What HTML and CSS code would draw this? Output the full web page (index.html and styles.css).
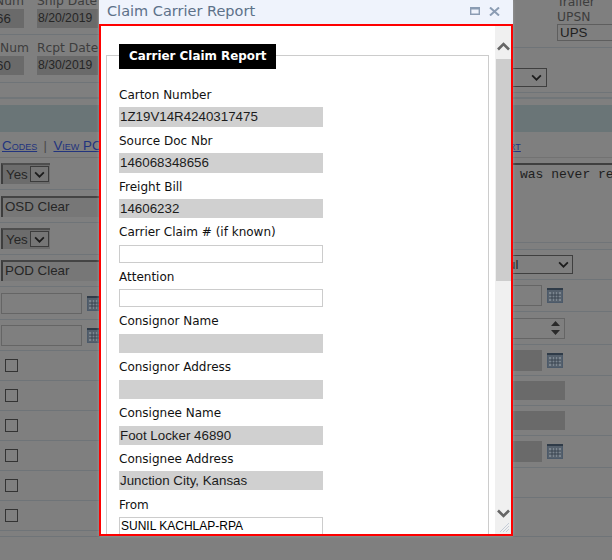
FILE: index.html
```html
<!DOCTYPE html>
<html lang="en">
<head>
<meta charset="utf-8">
<title>Claim Carrier Report</title>
<link rel="stylesheet" href="styles.css">
</head>
<body>
<svg class="defs" width="0" height="0" aria-hidden="true">
  <symbol id="cal" viewBox="0 0 16 15">
    <rect x="0.5" y="0.5" width="15" height="14" fill="#55606c" stroke="#4c5a6a"/>
    <rect x="0" y="0" width="16" height="2" fill="#2f3b48"/>
    <rect x="2" y="4" width="12" height="9" fill="#7b858f"/>
    <path d="M5 4v9M8 4v9M11 4v9M2 7h12M2 10h12" stroke="#39434e" stroke-width="1"/>
  </symbol>
  <symbol id="chev" viewBox="0 0 12 8">
    <path d="M1 1.5l5 5 5-5" fill="none" stroke="#1c1c1c" stroke-width="2"/>
  </symbol>
</svg>
<div class="page">
  <div class="col col-left">
    <div class="row row-a">
      <div class="pair pair-num"><span class="lab cut shift">Num</span><span class="box filled">66</span></div>
      <div class="pair pair-date"><span class="lab cut">Ship Date</span><span class="box filled">8/20/2019</span></div>
    </div>
    <div class="row row-b">
      <div class="pair pair-num"><span class="lab">Num</span><span class="box filled">60</span></div>
      <div class="pair pair-date"><span class="lab">Rcpt Date</span><span class="box filled">8/30/2019</span></div>
    </div>
    <div class="row row-thin"></div>
    <div class="band"></div>
    <div class="links"><a class="lnk">Codes</a> <span class="sep">|</span> <a class="lnk">View PO</a></div>
    <div class="row row-sel"><span class="yes">Yes<span class="yes-btn"><svg width="11" height="7"><use href="#chev"/></svg></span></span></div>
    <div class="row row-text"><span class="clear">OSD Clear</span></div>
    <div class="row row-sel2"><span class="yes">Yes<span class="yes-btn"><svg width="11" height="7"><use href="#chev"/></svg></span></span></div>
    <div class="row row-text"><span class="clear">POD Clear</span></div>
    <div class="row row-date"><span class="datebox"></span><svg class="calicon" width="16" height="15"><use href="#cal"/></svg></div>
    <div class="row row-date2"><span class="datebox"></span><svg class="calicon" width="16" height="15"><use href="#cal"/></svg></div>
    <div class="row row-check"><span class="check"></span></div>
    <div class="row row-check"><span class="check"></span></div>
    <div class="row row-check"><span class="check"></span></div>
    <div class="row row-check"><span class="check"></span></div>
    <div class="row row-check"><span class="check"></span></div>
    <div class="row row-check"><span class="check"></span></div>
    <div class="row row-end"></div>
  </div>

  <div class="col col-right">
    <div class="row r-top">
      <span class="lab cut">Trailer</span>
      <span class="lab">UPSN</span>
      <span class="ups">UPS</span>
    </div>
    <div class="row r-sel"><span class="sel sel-a"><svg width="11" height="7"><use href="#chev"/></svg></span></div>
    <div class="row r-gap"></div>
    <div class="band"></div>
    <div class="links r-links"><a class="lnk">rt</a></div>
    <div class="r-note">was never received</div>
    <div class="row r-thin"></div>
    <div class="row r-sel2"><span class="sel sel-b"><span class="ul">ul</span><svg width="11" height="7"><use href="#chev"/></svg></span></div>
    <div class="row r-row"><span class="rbox rbox-s"></span><svg class="calicon" width="16" height="15"><use href="#cal"/></svg></div>
    <div class="row r-row3"><span class="rbox rbox-l spin"><svg width="9" height="14" viewBox="0 0 9 14"><path d="M4.5 0L9 5H0zM4.5 14L0 9h9z" fill="#2a2a2a"/></svg></span></div>
    <div class="row r-row4"><span class="rbox rbox-s dark"></span><svg class="calicon" width="16" height="15"><use href="#cal"/></svg></div>
    <div class="row r-row2"><span class="rbox rbox-l dark short"></span></div>
    <div class="row r-row2"><span class="rbox rbox-l dark short"></span></div>
    <div class="row r-row"><span class="rbox rbox-s dark"></span><svg class="calicon" width="16" height="15"><use href="#cal"/></svg></div>
    <div class="row r-row2"></div>
    <div class="row r-end"></div>
  </div>
</div>

<section class="modal">
  <header class="modal-title">
    <h1 class="modal-h">Claim Carrier Report</h1>
    <svg class="tool" width="10" height="8" viewBox="0 0 10 8"><path d="M0.7 0.7h8.6v6.6h-8.6z M0.7 1.7h8.6" fill="none" stroke="#8b9cb3" stroke-width="1.4"/></svg>
    <svg class="tool" width="11" height="9" viewBox="0 0 11 9"><path d="M1 0.5l9 8M10 0.5l-9 8" fill="none" stroke="#8b9cb3" stroke-width="2"/></svg>
  </header>
  <div class="modal-body">
    <div class="content">
      <form class="sheet">
        <div class="legend">Carrier Claim Report</div>
        <label class="lbl l-first">Carton Number</label><div class="fld gray h20">1Z19V14R4240317475</div>
        <label class="lbl">Source Doc Nbr</label><div class="fld gray h20">146068348656</div>
        <label class="lbl">Freight Bill</label><div class="fld gray h19">14606232</div>
        <label class="lbl l-wide">Carrier Claim # (if known)</label><div class="fld blank h18"></div>
        <label class="lbl">Attention</label><div class="fld blank h18"></div>
        <label class="lbl l-wide">Consignor Name</label><div class="fld gray h19"></div>
        <label class="lbl l-wide">Consignor Address</label><div class="fld gray h19"></div>
        <label class="lbl l-wide">Consignee Name</label><div class="fld gray h19">Foot Locker 46890</div>
        <label class="lbl">Consignee Address</label><div class="fld gray h19">Junction City, Kansas</div>
        <label class="lbl l-low">From</label><div class="fld blank h20 from">SUNIL KACHLAP-RPA</div>
      </form>
    </div>
    <div class="scrollbar">
      <svg class="arrow" width="13" height="9" viewBox="0 0 13 9"><path d="M1 7.5l5.5-5.5 5.5 5.5" fill="none" stroke="#666" stroke-width="2.6"/></svg>
      <div class="thumb"></div>
      <svg class="arrow arrow-down" width="13" height="9" viewBox="0 0 13 9"><path d="M1 1.5l5.5 5.5 5.5-5.5" fill="none" stroke="#666" stroke-width="2.6"/></svg>
      <svg class="grip" width="9" height="9" viewBox="0 0 9 9"><path d="M0 9l9-9M3 9l6-6M6 9l3-3" stroke="#c5cdd8" stroke-width="1"/></svg>
    </div>
  </div>
</section>
</body>
</html>
```

FILE: styles.css
```css
* { box-sizing: border-box; }
html, body { margin: 0; padding: 0; height: 100%; overflow: hidden; }
body { background: #7f7f7f; font-family: "Liberation Sans", Arial, sans-serif; color: #262626; position: relative; }
.defs { position: absolute; }

.page { display: flex; justify-content: space-between; width: 612px; height: 560px; overflow: hidden; }
.col { width: 100px; flex: none; display: flex; flex-direction: column; }
.col-right { width: 99px; overflow: hidden; }
.row { border-bottom: 1px solid #6f7478; display: flex; align-items: center; flex: none; }

.lab { display: block; font: 12.3px/15px "DejaVu Sans", sans-serif; color: #3d3d3d; white-space: nowrap; }
.cut { margin-top: -6px; }
.shift { margin-left: -5px; }
.pair { display: flex; flex-direction: column; flex: none; }
.pair-num { width: 37px; }
.pair-date { width: 63px; }
.box { display: block; height: 19px; font-size: 13.33px; line-height: 19px; white-space: nowrap; overflow: hidden; background: #6a6a6a; }
.pair-num .box { width: 24px; text-indent: -4px; }
.pair-date .box { width: 61px; padding-left: 1px; font-size: 12.2px; }
.row-a { height: 35px; align-items: flex-start; overflow: hidden; }
.row-b { height: 48px; align-items: flex-start; padding-top: 6px; overflow: hidden; }
.row-thin { height: 16px; border-bottom: 2px solid #717679; }
.band { height: 27px; margin-top: 6px; background: #6a7577; flex: none; }
.links { height: 26px; flex: none; padding: 5px 0 0 2px; font-family: "Liberation Sans", sans-serif; line-height: 16px; color: #24357e; font-variant: small-caps; white-space: nowrap; border-bottom: 1px solid #727272; }
.lnk { color: #22347e; text-decoration: underline; font-size: 13.33px; }
.sep { color: #4a4a4a; font-size: 13px; margin: 0 2px; }

.yes { display: inline-flex; align-items: center; width: 49px; height: 21px; font-size: 13.33px; padding: 0 0 1px 3px; background: #6c6c6c; border-left: 2px solid #3e3e3e; border-top: 2px solid #4e4e4e; justify-content: space-between; margin-left: 1px; }
.yes-btn { display: flex; align-items: center; justify-content: center; width: 19px; height: 16px; border: 1px solid #3c3c3c; margin-right: 1px; background: #767676; }
.row-sel { height: 32px; align-items: flex-start; padding-top: 5px; }
.row-sel2 { height: 32px; }
.row-text { height: 33px; }
.row-text:nth-child(9) { height: 32px; }
.clear { display: block; width: 99px; height: 21px; margin-left: 1px; font-size: 13.33px; line-height: 17px; padding-left: 2px; border-left: 2px solid #3d3d3d; border-top: 2px solid #444; background: #777; }
.row-date { height: 33px; }
.row-date2 { height: 31px; }
.datebox { flex: none; width: 81px; height: 21px; margin-left: 1px; border: 1px solid #656565; }
.calicon { margin-left: 5px; flex: none; }
.row-check { height: 30px; padding-left: 5px; }
.check { width: 13px; height: 13px; border: 1px solid #333; display: block; }
.row-end { height: 6px; }

.r-top { height: 48px; flex-direction: column; align-items: flex-start; padding-left: 44px; overflow: hidden; }
.r-top .cut { margin-top: -5px; }
.ups { width: 60px; height: 17px; margin-top: -1px; border: 1px solid #5e5e5e; font-size: 13.33px; line-height: 15px; padding-left: 2px; flex: none; color: #1e1e1e; }
.r-sel { height: 45px; align-items: flex-start; padding-top: 20px; }
.sel { height: 19px; border: 1px solid #3f3f3f; border-left: 0; display: flex; align-items: center; justify-content: flex-end; flex: none; }
.sel-a { width: 34px; padding-right: 4px; }
.sel-b { width: 60px; padding-right: 3px; justify-content: space-between; }
.r-gap { height: 6px; border-bottom: 2px solid #717679; }
.r-links { padding-left: 0; }
.r-links .lnk { margin-left: -4px; display: inline-block; }
.r-note { height: 80px; flex: none; margin-top: 5px; border-top: 2px solid #3f3f3f; padding: 2px 0 0 7px; font: 13px/16px "Liberation Mono", monospace; white-space: nowrap; color: #1e1e1e; border-bottom: 1px solid #707478; }
.r-thin { height: 7px; }
.r-sel2 { height: 30px; }
.r-row { height: 32px; }
.r-row2 { height: 30px; }
.r-row3 { height: 33px; }
.r-row4 { height: 31px; }
.r-end { height: 39px; }
.rbox { display: block; height: 21px; border: 1px solid #656565; border-left: 0; flex: none; }
.rbox-s { width: 29px; }
.rbox-l { width: 52px; }
.short { height: 19px; }
.dark { background: #6a6a6a; border-color: #6a6a6a; }
.spin { display: flex; align-items: center; justify-content: flex-end; padding-right: 4px; }
.ul { font-size: 13.33px; margin-left: -5px; }

.modal { position: absolute; left: 99px; top: 0; width: 414px; height: 536px; display: flex; flex-direction: column; background: #fff; box-shadow: 0 0 3px rgba(170,170,170,.7); }
.modal-title { height: 24px; flex: none; background: #eff3fc; display: flex; align-items: center; padding: 0 13px 2px 8px; gap: 9px; }
.modal-h { margin: 0 auto 0 0; font: 400 14.5px/22px "DejaVu Sans", sans-serif; color: #5c7189; }
.tool { flex: none; }
.modal-body { flex: 1; min-height: 0; border: 2px solid #fe0000; display: flex; background: #fff; }
.content { flex: 1; min-width: 0; overflow: hidden; padding: 29px 6px 0 5px; }
.sheet { border: 1px solid #ccc; border-bottom: 0; height: 500px; padding: 0 0 0 12px; }
.legend { background: #000; color: #fff; font: 700 11.9px/25px "DejaVu Sans", sans-serif; width: 157px; height: 25px; margin-top: -12px; padding-left: 10px; white-space: nowrap; }
.lbl { display: block; font: 12px/15px "DejaVu Sans", sans-serif; color: #111; height: 15px; margin: 7px 0 4px; white-space: nowrap; }
.l-first { margin-top: 19px; }
.l-wide { margin-bottom: 5px; }
.l-low { margin-top: 8px; }
.fld { width: 204px; font: 13.33px/20px "Liberation Sans", sans-serif; padding-left: 1px; color: #1c1c1c; white-space: nowrap; overflow: hidden; }
.gray { background: #d0d0d0; }
.blank { background: #fff; border: 1px solid #ccc; }
.h20 { height: 20px; line-height: 19px; }
.h19 { height: 19px; line-height: 19px; }
.h18 { height: 18px; }
.from { font-size: 12px; line-height: 17px; padding-left: 1px; color: #000; }

.scrollbar { width: 16px; flex: none; background: #f0f0f0; display: flex; flex-direction: column; align-items: center; position: relative; }
.arrow { flex: none; margin-top: 16px; }
.thumb { width: 15px; align-self: flex-end; height: 222px; background: #cdcdcd; margin-top: 8px; }
.arrow-down { margin-top: auto; margin-bottom: 16px; }
.grip { position: absolute; right: 2px; bottom: 2px; }
```
